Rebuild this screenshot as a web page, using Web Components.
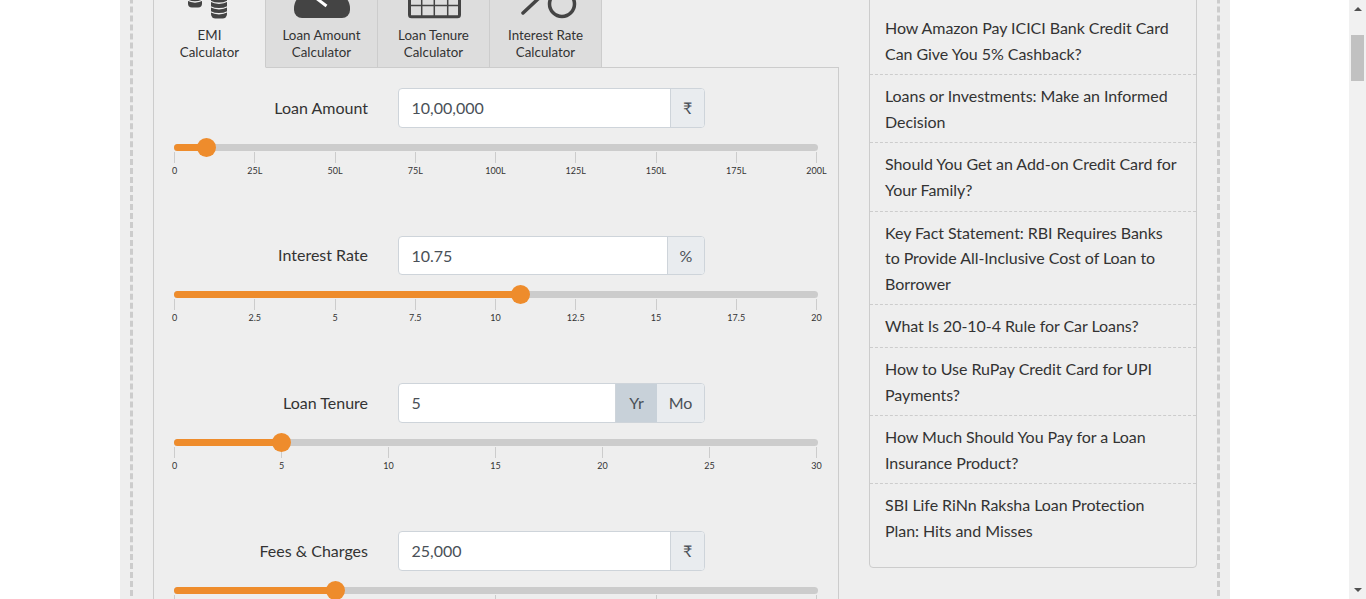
<!DOCTYPE html>
<html>
<head>
<meta charset="utf-8">
<style>
html, body { margin: 0; height: 599px; overflow: hidden; background: #fff; }
body { font-family: Lato, "Liberation Sans", sans-serif; color: #333; }
</style>
</head>
<body>
<emi-page>
  <emi-calc>
    <loan-field label="Loan Amount" value="10,00,000" addon="₹" percent="5" ticks="0,25L,50L,75L,100L,125L,150L,175L,200L"></loan-field>
    <loan-field label="Interest Rate" value="10.75" addon="%" percent="53.75" ticks="0,2.5,5,7.5,10,12.5,15,17.5,20"></loan-field>
    <loan-field label="Loan Tenure" value="5" toggle percent="16.67" ticks="0,5,10,15,20,25,30"></loan-field>
    <loan-field label="Fees &amp; Charges" value="25,000" addon="₹" percent="25" ticks=",,,,"></loan-field>
  </emi-calc>
  <side-list>
    <li-item>How Amazon Pay ICICI Bank Credit Card Can Give You 5% Cashback?</li-item>
    <li-item>Loans or Investments: Make an Informed Decision</li-item>
    <li-item>Should You Get an Add-on Credit Card for Your Family?</li-item>
    <li-item>Key Fact Statement: RBI Requires Banks to Provide All-Inclusive Cost of Loan to Borrower</li-item>
    <li-item>What Is 20-10-4 Rule for Car Loans?</li-item>
    <li-item>How to Use RuPay Credit Card for UPI Payments?</li-item>
    <li-item>How Much Should You Pay for a Loan Insurance Product?</li-item>
    <li-item last>SBI Life RiNn Raksha Loan Protection Plan: Hits and Misses</li-item>
  </side-list>
</emi-page>
<script>
'use strict'

class EmiPage extends HTMLElement {
  constructor() {
    super();
    this.attachShadow({ mode: 'open' }).innerHTML = `
<style>
  :host { display: flex; height: 599px; overflow: hidden; }
  .view { flex: 1; overflow: hidden; padding-left: 120px; }
  .wrap { width: 1110px; background: #eee; padding: 0 10px; box-sizing: border-box; height: 599px; overflow: hidden; }
  .dash {
    border-left: 3px dashed #ccc; border-right: 3px dashed #ccc;
    height: 1200px; margin-top: -200px;
    padding: 0 20px;
    display: flex; gap: 30px; align-items: flex-start;
  }
  .bar { width: 17px; background: #f1f1f1; display: flex; flex-direction: column; align-items: center; }
  .thumb { width: 13px; height: 46px; background: #c1c1c1; margin-top: 24px; }
  .up, .down { width: 0; height: 0; border-left: 4.5px solid transparent; border-right: 4.5px solid transparent; }
  .up { border-bottom: 4px solid #505050; margin-top: 7px; }
  .down { border-top: 4px solid #505050; margin-top: auto; margin-bottom: 7px; }
</style>
<div class="view"><div class="wrap"><div class="dash"><slot></slot></div></div></div>
<div class="bar"><div class="up"></div><div class="thumb"></div><div class="down"></div></div>`;
  }
}

// icons are drawn in tab coordinates: y=0 is the top edge of the window
const icon = body => `<svg width="112" height="56" viewBox="0 -32 112 56">${body}</svg>`;
const icons = [
  icon(`<rect x="34" y="-8" width="14" height="15.500" rx="4" fill="#444"/>
    <rect x="57" y="-8" width="16" height="26.500" rx="4.500" fill="#444"/>
    <path fill="none" stroke="#eee" stroke-width="1.300" d="M33 0Q41 4 49 0M56 1Q65 5.500 74 1M56 6.500Q65 11 74 6.500M56 11.500Q65 16 74 11.500"/>`),
  icon(`<path fill="#444" d="M28 8C28 3 31-2 34-4H78C81-2 84 3 84 8V10A8 8 0 0 1 76 18H36A8 8 0 0 1 28 10Z"/>
    <path stroke="#fff" stroke-width="3" d="M50-2L60.500 6"/>`),
  icon(`<rect x="31.500" y="-6" width="50" height="22.800" rx="2" fill="none" stroke="#444" stroke-width="3"/>
    <path fill="none" stroke="#444" stroke-width="1.500" d="M30 5.500H83M43.700-6V16M56.300-6V16M69.700-6V16"/>`),
  icon(`<path fill="none" stroke="#444" stroke-width="3.500" stroke-linecap="round" d="M33 13L48-1"/>
    <circle cx="72" cy="4" r="12.500" fill="none" stroke="#444" stroke-width="3.500"/>`)
];

class EmiCalc extends HTMLElement {
  constructor() {
    super();
    const names = [['EMI', 'Calculator'], ['Loan Amount', 'Calculator'], ['Loan Tenure', 'Calculator'], ['Interest Rate', 'Calculator']];
    const tabs = names.map((n, i) => `
      <div class="tab ${i == 0 ? 'on' : ''}">
        <div class="ico">${icons[i]}</div>
        <div>${n[0]}<br>${n[1]}</div>
      </div>`).join('');
    this.attachShadow({ mode: 'open' }).innerHTML = `
<style>
  :host { display: block; width: 686px; flex: none; }
  .tabs { display: flex; height: 268px; align-items: stretch; }
  .tab {
    width: 112px; box-sizing: border-box; background: #ddd; text-align: center;
    font-size: 13.33px; line-height: 17px; color: #333;
    border-right: 1px solid #ccc; border-bottom: 1px solid #ccc;
    display: flex; flex-direction: column; justify-content: flex-end; padding-bottom: 6px;
  }
  .tab.on { background: #eee; border-bottom-color: #eee; }
  .ico { height: 56px; margin-bottom: 3px; }
  .ico svg { display: block; }
  .rest { flex: 1; border-bottom: 1px solid #ccc; }
  .body { border-left: 1px solid #ccc; border-right: 1px solid #ccc; padding: 20px 20px 0; height: 800px; }
  .head { border-left: 1px solid #ccc; }
</style>
<div class="head"><div class="tabs">${tabs}<div class="rest"></div></div></div>
<div class="body"><slot></slot></div>`;
  }
}

class LoanField extends HTMLElement {
  constructor() {
    super();
    const pct = +this.getAttribute('percent');
    const ticks = this.getAttribute('ticks').split(',');
    const addon = this.hasAttribute('toggle')
      ? `<span class="add yr">Yr</span><span class="add mo">Mo</span>`
      : `<span class="add ${this.getAttribute('addon') == '%' ? 'pc' : ''}">${this.getAttribute('addon')}</span>`;
    const tickHtml = ticks.map(t => `<div class="t"><i></i><b>${t}</b></div>`).join('');
    this.attachShadow({ mode: 'open' }).innerHTML = `
<style>
  :host { display: block; height: 147.667px; font-size: 16px; }
  .row { display: flex; align-items: center; height: 39.6px; }
  label { width: 224px; text-align: right; padding-right: 30px; margin-bottom: 1px; box-sizing: border-box; color: #333; }
  .group { flex: none; width: 307px; height: 39.6px; display: flex; box-sizing: border-box; border: 1px solid #ced4da; border-radius: 4px; overflow: hidden; background: #fff; }
  .val { flex: 1; padding-left: 12.500px; line-height: 37.6px; color: #495057; }
  .add { width: 34px; box-sizing: border-box; text-align: center; background: #e9ecef; border-left: 1px solid #ced4da; color: #495057; line-height: 37.6px; }
  .add.pc { width: 37px; }
  .add.yr { width: 42px; background: #c8d1d9; }
  .add.mo { width: 47px; border-left: none; }
  .slider { position: relative; margin-top: 16px; height: 7px; width: 644px; background: #ccc; border-radius: 4px; }
  .fill { height: 7px; background: #ee8c2c; border-radius: 4px 0 0 4px; width: ${pct}%; }
  .knob { position: absolute; top: -6px; left: ${pct}%; width: 19px; height: 19px; margin-left: -9px; border-radius: 50%; background: #ee8c2c; }
  .ticks { display: flex; justify-content: space-between; width: 642px; margin: 1px 0 0 0.5px; }
  .t { width: 0; display: flex; flex-direction: column; align-items: center; }
  .t i { display: block; width: 1px; height: 11px; background: #ccc; flex: none; }
  .t b { font-weight: 400; font-size: 9px; line-height: 12px; margin-top: 2px; color: #333; white-space: nowrap; }
</style>
<div class="row"><label>${this.getAttribute('label')}</label>
  <div class="group"><span class="val">${this.getAttribute('value')}</span>${addon}</div></div>
<div class="slider"><div class="fill"></div><div class="knob"></div></div>
<div class="ticks">${tickHtml}</div>`;
  }
}

class SideList extends HTMLElement {
  constructor() {
    super();
    this.attachShadow({ mode: 'open' }).innerHTML = `
<style>
  :host { display: block; width: 328px; flex: none; box-sizing: border-box; border: 1px solid #ccc; border-radius: 4px; height: 768px; padding-top: 206px; }
</style><slot></slot>`;
  }
}

class LiItem extends HTMLElement {
  constructor() {
    super();
    this.attachShadow({ mode: 'open' }).innerHTML = `
<style>
  :host { display: block; padding: 8px 15px; font-size: 16px; line-height: 25.6px; letter-spacing: -0.05px; color: #333; border-bottom: 1px dashed #ccc; }
  :host([last]) { border-bottom: none; }
</style><slot></slot>`;
  }
}

customElements.define('emi-page', EmiPage);
customElements.define('emi-calc', EmiCalc);
customElements.define('loan-field', LoanField);
customElements.define('side-list', SideList);
customElements.define('li-item', LiItem);
</script>
</body>
</html>
